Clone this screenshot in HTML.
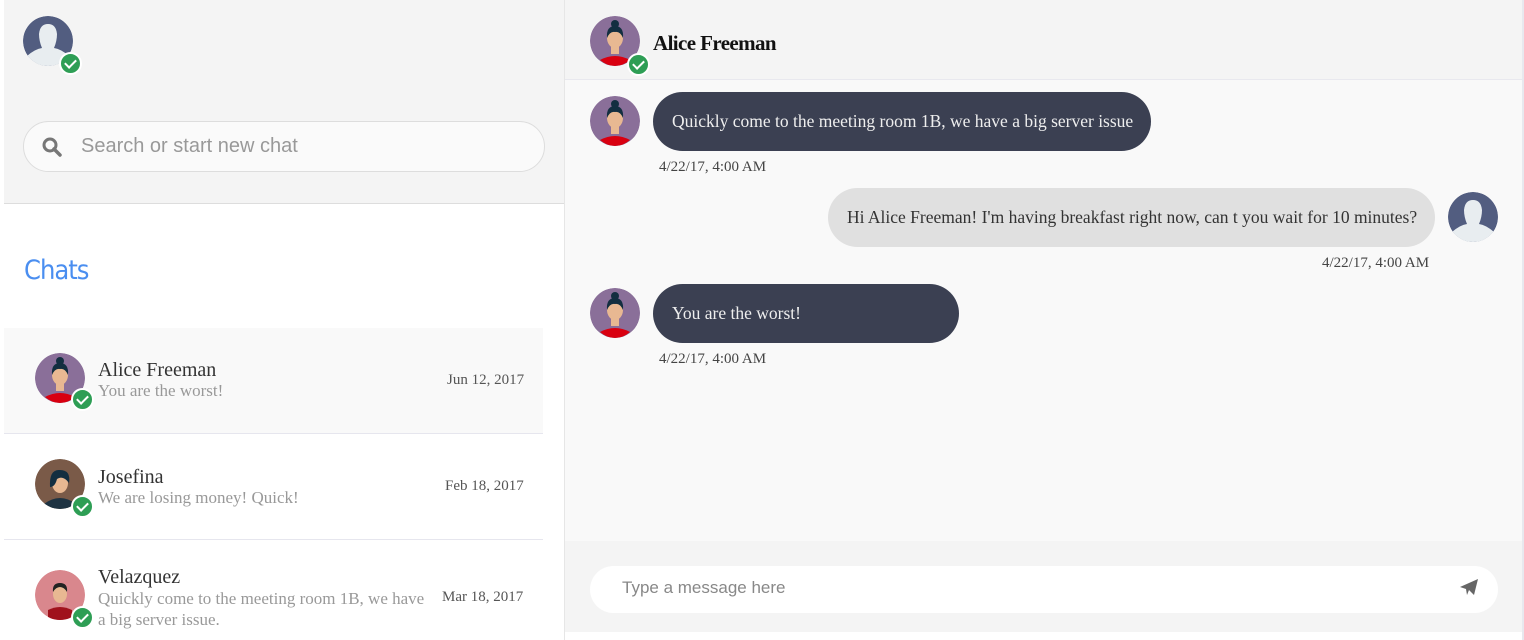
<!DOCTYPE html><html><head><style>
*{box-sizing:border-box;margin:0;padding:0}
body{width:1524px;height:640px;background:#fff;font-family:"Liberation Serif",serif;position:relative;overflow:hidden}
.abs{position:absolute}
.av{position:absolute;width:50px;height:50px;border-radius:50%;overflow:hidden}
.chk{position:absolute;width:23px;height:23px;border-radius:50%;background:#2e9e55;border:2px solid #fff}
.chk:after{content:"";position:absolute;left:6px;top:3px;width:5px;height:9px;border:solid #fff;border-width:0 2.5px 2.5px 0;transform:rotate(45deg)}
.name{font-size:20px;color:#333}
.prev{font-size:17px;color:#999}
.date{font-size:15px;color:#555}
.bub{position:absolute;height:59px;border-radius:30px;font-size:17.5px;line-height:59px;padding:0 19px;white-space:nowrap}
.ts{position:absolute;font-size:15px;color:#444}
</style></head><body>
<svg width="0" height="0" style="position:absolute"><defs>
<symbol id="user" viewBox="0 0 50 50"><circle cx="25" cy="25" r="25" fill="#525d80"/><path d="M4 40 Q12 33 19 32 Q16 25 16 18 Q17 8 25 8 Q33 8 34 18 Q34 25 31 32 Q38 33 46 40 Q38 50 25 50 Q12 50 4 40Z" fill="#e8edf0"/></symbol>
<symbol id="alice" viewBox="0 0 50 50"><circle cx="25" cy="25" r="25" fill="#8a6f99"/><path d="M10 44 Q25 36 40 44 Q33 50 25 50 Q17 50 10 44Z" fill="#d90010"/><rect x="21" y="28" width="8" height="10" fill="#e8b892"/><ellipse cx="25" cy="22" rx="8" ry="10" fill="#e8b892"/><path d="M17 22 Q16 10 25 10 Q34 10 33 22 Q30 15 25 16 Q20 15 17 22Z" fill="#132e40"/><circle cx="25" cy="8" r="4" fill="#132e40"/></symbol>
<symbol id="jose" viewBox="0 0 50 50"><circle cx="25" cy="25" r="25" fill="#7a5a48"/><path d="M9 45 Q25 33 41 45 Q33 50 25 50 Q17 50 9 45Z" fill="#1e3342"/><ellipse cx="25" cy="24" rx="8" ry="10" fill="#e8b892"/><path d="M15 28 Q14 10 25 11 Q36 11 34 24 Q28 16 22 20 Q20 28 15 28Z" fill="#132e40"/></symbol>
<symbol id="vel" viewBox="0 0 50 50"><circle cx="25" cy="25" r="25" fill="#d9878d"/><path d="M13 50 L13 40 Q25 34 37 40 L37 50Z" fill="#a0121c"/><ellipse cx="25" cy="24" rx="7" ry="9" fill="#e8b892"/><path d="M18 22 Q17 13 25 13 Q33 13 32 22 Q29 17 25 17 Q21 17 18 22Z" fill="#222"/></symbol>
</defs></svg>

<div class="abs" style="left:4px;top:0;width:560px;height:204px;background:#f4f4f4;border-bottom:1px solid #ddd"></div>
<div class="abs" style="left:564px;top:0;width:1px;height:640px;background:#e6e6e6"></div>
<svg class="av" style="left:23px;top:16px"><use href="#user"/></svg><div class="chk" style="left:59px;top:52px"></div>
<div class="abs" style="left:23px;top:121px;width:522px;height:51px;border:1px solid #ddd;border-radius:26px;background:#fafafa"></div>
<svg class="abs" style="left:41px;top:136px" width="22" height="22" viewBox="0 0 22 22"><circle cx="9" cy="9" r="6" fill="none" stroke="#777" stroke-width="3"/><path d="M13 13 L19 19" stroke="#777" stroke-width="3.5" stroke-linecap="round"/></svg>
<div class="abs" style="left:81px;top:135px;font:20px 'Liberation Sans',sans-serif;color:#999">Search or start new chat</div>
<div class="abs" style="left:24px;top:255px;font:27px 'DejaVu Sans Condensed','DejaVu Sans',sans-serif;color:#4a8ef0;letter-spacing:-1px">Chats</div>

<div class="abs" style="left:4px;top:328px;width:539px;height:106px;background:#f9f9f9;border-bottom:1px solid #e6e6ee"></div>
<svg class="av" style="left:35px;top:353px"><use href="#alice"/></svg><div class="chk" style="left:71px;top:388px"></div>
<div class="abs name" style="left:98px;top:359px">Alice Freeman</div>
<div class="abs prev" style="left:98px;top:381px">You are the worst!</div>
<div class="abs date" style="left:447px;top:372px">Jun 12, 2017</div>

<div class="abs" style="left:4px;top:539px;width:539px;height:1px;background:#e6e6ee"></div>
<svg class="av" style="left:35px;top:459px"><use href="#jose"/></svg><div class="chk" style="left:71px;top:495px"></div>
<div class="abs name" style="left:98px;top:466px">Josefina</div>
<div class="abs prev" style="left:98px;top:488px">We are losing money! Quick!</div>
<div class="abs date" style="left:445px;top:478px">Feb 18, 2017</div>

<svg class="av" style="left:35px;top:570px"><use href="#vel"/></svg><div class="chk" style="left:71px;top:606px"></div>
<div class="abs name" style="left:98px;top:566px">Velazquez</div>
<div class="abs prev" style="left:98px;top:588px;width:334px;line-height:21px">Quickly come to the meeting room 1B, we have a big server issue.</div>
<div class="abs date" style="left:442px;top:589px">Mar 18, 2017</div>

<div class="abs" style="left:565px;top:0;width:957px;height:80px;background:#f4f4f4;border-bottom:1px solid #e8e8ee"></div>
<div class="abs" style="left:565px;top:80px;width:957px;height:461px;background:#f9f9f9"></div>
<div class="abs" style="left:565px;top:541px;width:957px;height:91px;background:#f4f4f4"></div>
<div class="abs" style="left:1522px;top:0;width:2px;height:640px;background:#e8e8ee"></div>
<svg class="av" style="left:590px;top:16px"><use href="#alice"/></svg><div class="chk" style="left:627px;top:53px"></div>
<div class="abs" style="left:653px;top:31px;font-size:21px;font-weight:bold;color:#111;letter-spacing:-0.6px">Alice Freeman</div>

<svg class="av" style="left:590px;top:96px"><use href="#alice"/></svg>
<div class="bub" style="left:653px;top:92px;width:498px;background:#3b4052;color:#eee">Quickly come to the meeting room 1B, we have a big server issue</div>
<div class="ts" style="left:659px;top:159px">4/22/17, 4:00 AM</div>

<svg class="av" style="left:1448px;top:192px"><use href="#user"/></svg>
<div class="bub" style="left:828px;top:188px;width:607px;background:#e0e0e0;color:#333">Hi Alice Freeman! I'm having breakfast right now, can t you wait for 10 minutes?</div>
<div class="ts" style="left:1322px;top:255px">4/22/17, 4:00 AM</div>

<svg class="av" style="left:590px;top:288px"><use href="#alice"/></svg>
<div class="bub" style="left:653px;top:284px;width:306px;background:#3b4052;color:#eee">You are the worst!</div>
<div class="ts" style="left:659px;top:351px">4/22/17, 4:00 AM</div>

<div class="abs" style="left:590px;top:566px;width:908px;height:47px;background:#fff;border-radius:24px"></div>
<div class="abs" style="left:622px;top:578px;font:17px 'Liberation Sans',sans-serif;color:#888">Type a message here</div>
<svg class="abs" style="left:1459px;top:578px" width="20" height="18" viewBox="0 0 20 18"><path d="M1 9 L19 1 L15 17 L10 12 L8 17 L7 11Z" fill="#666"/></svg>
</body></html>
